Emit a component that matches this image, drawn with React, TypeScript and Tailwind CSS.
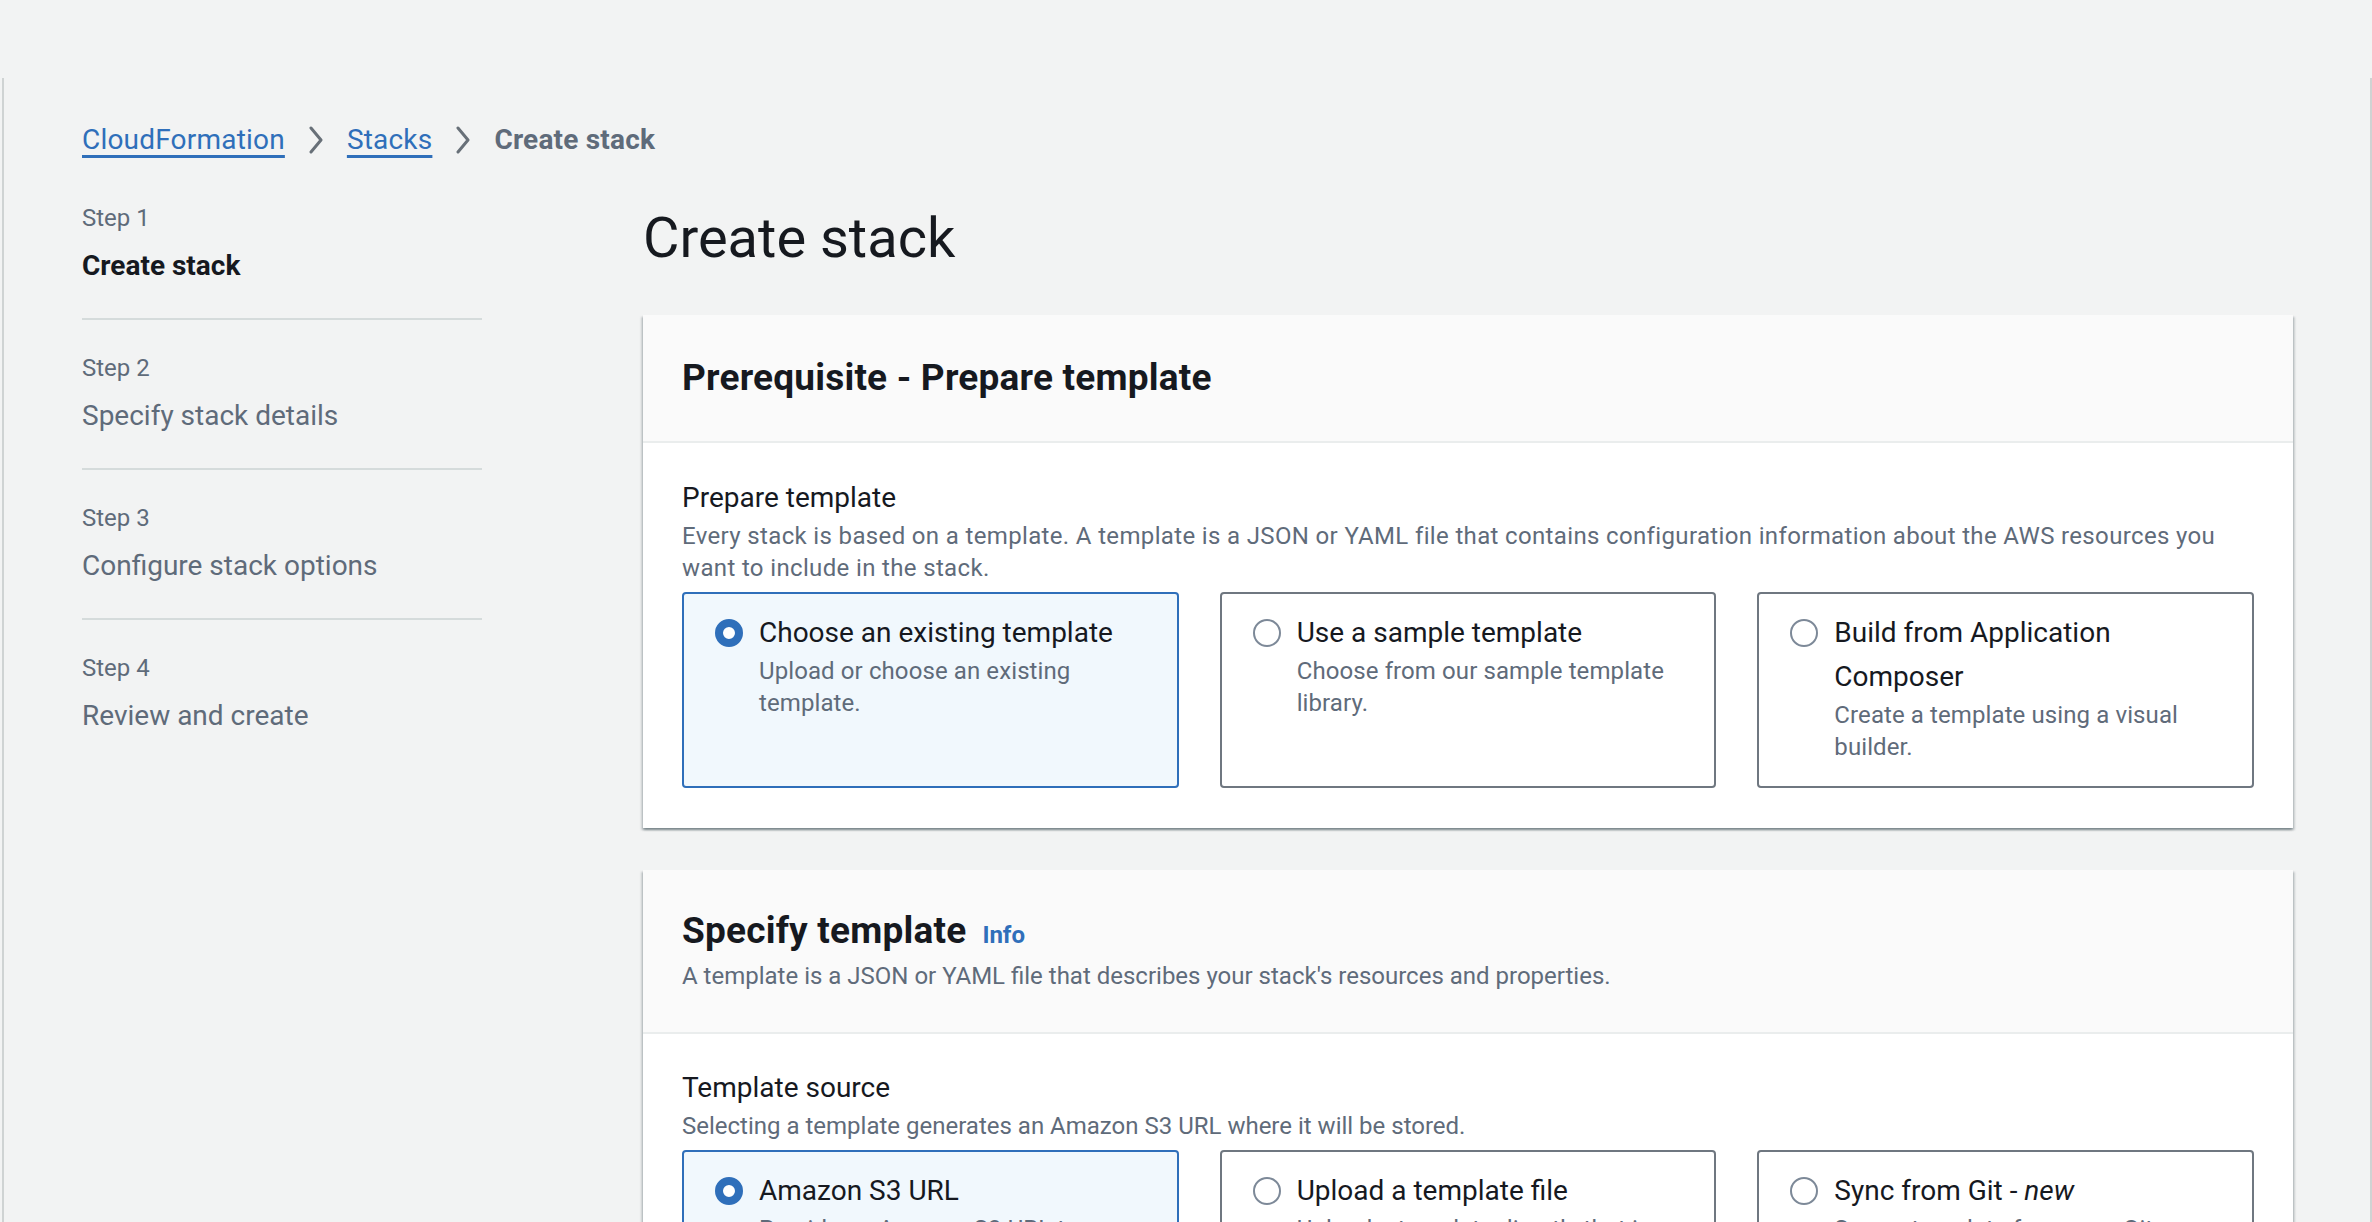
import React from 'react';

type TileProps = {
    title: React.ReactNode;
    description: string;
    checked?: boolean;
};

const Radio: React.FC<{ checked?: boolean }> = ({ checked }) =>
    checked ? (
        <span className="mt-2 h-7 w-7 shrink-0 rounded-full border-[8px] border-[#2f6fba] bg-white" />
    ) : (
        <span className="mt-2 h-7 w-7 shrink-0 rounded-full border-2 border-[#7d8998] bg-white" />
    );

const Tile: React.FC<TileProps> = ({ title, description, checked }) => (
    <div
        className={
            checked
                ? 'rounded-[4px] border-2 border-[#2f6fba] bg-[#f1f8fd] px-[31px] pt-[17px] pb-[23px]'
                : 'rounded-[4px] border-2 border-[#6f7780] bg-white px-[31px] pt-[17px] pb-[23px]'
        }
    >
        <div className="flex items-start gap-4">
            <Radio checked={checked} />
            <div className="min-w-0">
                <div className="text-[28px] leading-[44px] text-[#16191f]">{title}</div>
                <div className="text-[24px] leading-[32px] tracking-[0.1px] text-[#5f6b7a]">{description}</div>
            </div>
        </div>
    </div>
);

const Chevron = () => (
    <svg width="16" height="28" viewBox="0 0 16 28" fill="none" className="shrink-0">
        <path d="M3 2 L13 14 L3 26" stroke="#687078" strokeWidth="3" strokeLinecap="round" strokeLinejoin="round" />
    </svg>
);

const steps = [
    { label: 'Step 1', title: 'Create stack', active: true },
    { label: 'Step 2', title: 'Specify stack details' },
    { label: 'Step 3', title: 'Configure stack options' },
    { label: 'Step 4', title: 'Review and create' }
];

const cardShadow =
    'shadow-[0_2px_2px_0_rgba(0,28,36,0.3),2px_2px_2px_0_rgba(0,28,36,0.15),-2px_2px_2px_0_rgba(0,28,36,0.15)]';

export default function App() {
    return (
        <div className="h-[1222px] overflow-hidden bg-[#f2f3f3] font-['Roboto','Liberation_Sans',sans-serif] text-[#16191f]">
            <div className="mt-[78px] ml-[2px] min-h-[1144px] border-x-2 border-[#cfd3d3] pl-[78px] pr-[77px] pt-[40px]">
                {/* Breadcrumbs */}
                <nav className="flex items-center gap-[23px] text-[28px] leading-[44px] tracking-[0.2px]">
                    <a className="text-[#2f6fba] underline decoration-[3px] underline-offset-[6px]">CloudFormation</a>
                    <Chevron />
                    <a className="text-[#2f6fba] underline decoration-[3px] underline-offset-[6px]">Stacks</a>
                    <Chevron />
                    <span className="font-bold text-[#5f6b7a]">Create stack</span>
                </nav>

                <div className="mt-[40px] flex gap-[161px]">
                    {/* Wizard steps */}
                    <ul className="w-[400px] shrink-0">
                        {steps.map((s, i) => (
                            <li
                                key={s.label}
                                className={
                                    i === 0
                                        ? 'border-b-2 border-[#d5dbdb] pb-[30px]'
                                        : i === steps.length - 1
                                        ? 'pt-[32px]'
                                        : 'border-b-2 border-[#d5dbdb] pt-[32px] pb-[30px]'
                                }
                            >
                                <div className="text-[24px] leading-[32px] text-[#5f6b7a]">{s.label}</div>
                                <div
                                    className={
                                        s.active
                                            ? 'mt-[10px] text-[28px] font-bold leading-[44px] text-[#16191f]'
                                            : 'mt-[10px] text-[28px] leading-[44px] text-[#5f6b7a]'
                                    }
                                >
                                    {s.title}
                                </div>
                            </li>
                        ))}
                    </ul>

                    {/* Main content */}
                    <div className="min-w-0 flex-1">
                        <h1 className="mt-[4px] mb-[45px] text-[56px] leading-[64px] text-[#16191f]">Create stack</h1>

                        <section className={`bg-white ${cardShadow}`}>
                            <div className="border-b-2 border-[#eaeded] bg-[#fafafa] px-[39px] py-[40px]">
                                <h2 className="text-[37px] font-bold leading-[46px] tracking-[0.2px]">Prerequisite - Prepare template</h2>
                            </div>
                            <div className="px-[39px] pt-[33px] pb-[40px]">
                                <div className="text-[28px] leading-[44px]">Prepare template</div>
                                <p className="text-[24px] leading-[32px] tracking-[0.35px] text-[#5f6b7a]">
                                    Every stack is based on a template. A template is a JSON or YAML file that contains
                                    configuration information about the AWS resources you want to include in the stack.
                                </p>
                                <div className="mt-[8px] grid grid-cols-3 gap-[41px]">
                                    <Tile checked title="Choose an existing template" description="Upload or choose an existing template." />
                                    <Tile title="Use a sample template" description="Choose from our sample template library." />
                                    <Tile title="Build from Application Composer" description="Create a template using a visual builder." />
                                </div>
                            </div>
                        </section>

                        <section className={`mt-[42px] bg-white ${cardShadow}`}>
                            <div className="border-b-2 border-[#eaeded] bg-[#fafafa] px-[39px] pt-[38px] pb-[40px]">
                                <div className="flex items-baseline gap-4">
                                    <h2 className="text-[37px] font-bold leading-[46px] tracking-[0.2px]">Specify template</h2>
                                    <a className="text-[24px] font-bold text-[#2f6fba]">Info</a>
                                </div>
                                <p className="mt-[6px] text-[24px] leading-[32px] text-[#5f6b7a]">
                                    A template is a JSON or YAML file that describes your stack's resources and properties.
                                </p>
                            </div>
                            <div className="px-[39px] pt-[32px] pb-[40px]">
                                <div className="text-[28px] leading-[44px]">Template source</div>
                                <p className="text-[24px] leading-[32px] text-[#5f6b7a]">
                                    Selecting a template generates an Amazon S3 URL where it will be stored.
                                </p>
                                <div className="mt-[8px] grid grid-cols-3 gap-[41px]">
                                    <Tile checked title="Amazon S3 URL" description="Provide an Amazon S3 URL to your template." />
                                    <Tile title="Upload a template file" description="Upload a template directly that is stored locally." />
                                    <Tile
                                        title={
                                            <>
                                                Sync from Git - <i>new</i>
                                            </>
                                        }
                                        description="Sync a template from your Git repository."
                                    />
                                </div>
                            </div>
                        </section>
                    </div>
                </div>
            </div>
        </div>
    );
}
